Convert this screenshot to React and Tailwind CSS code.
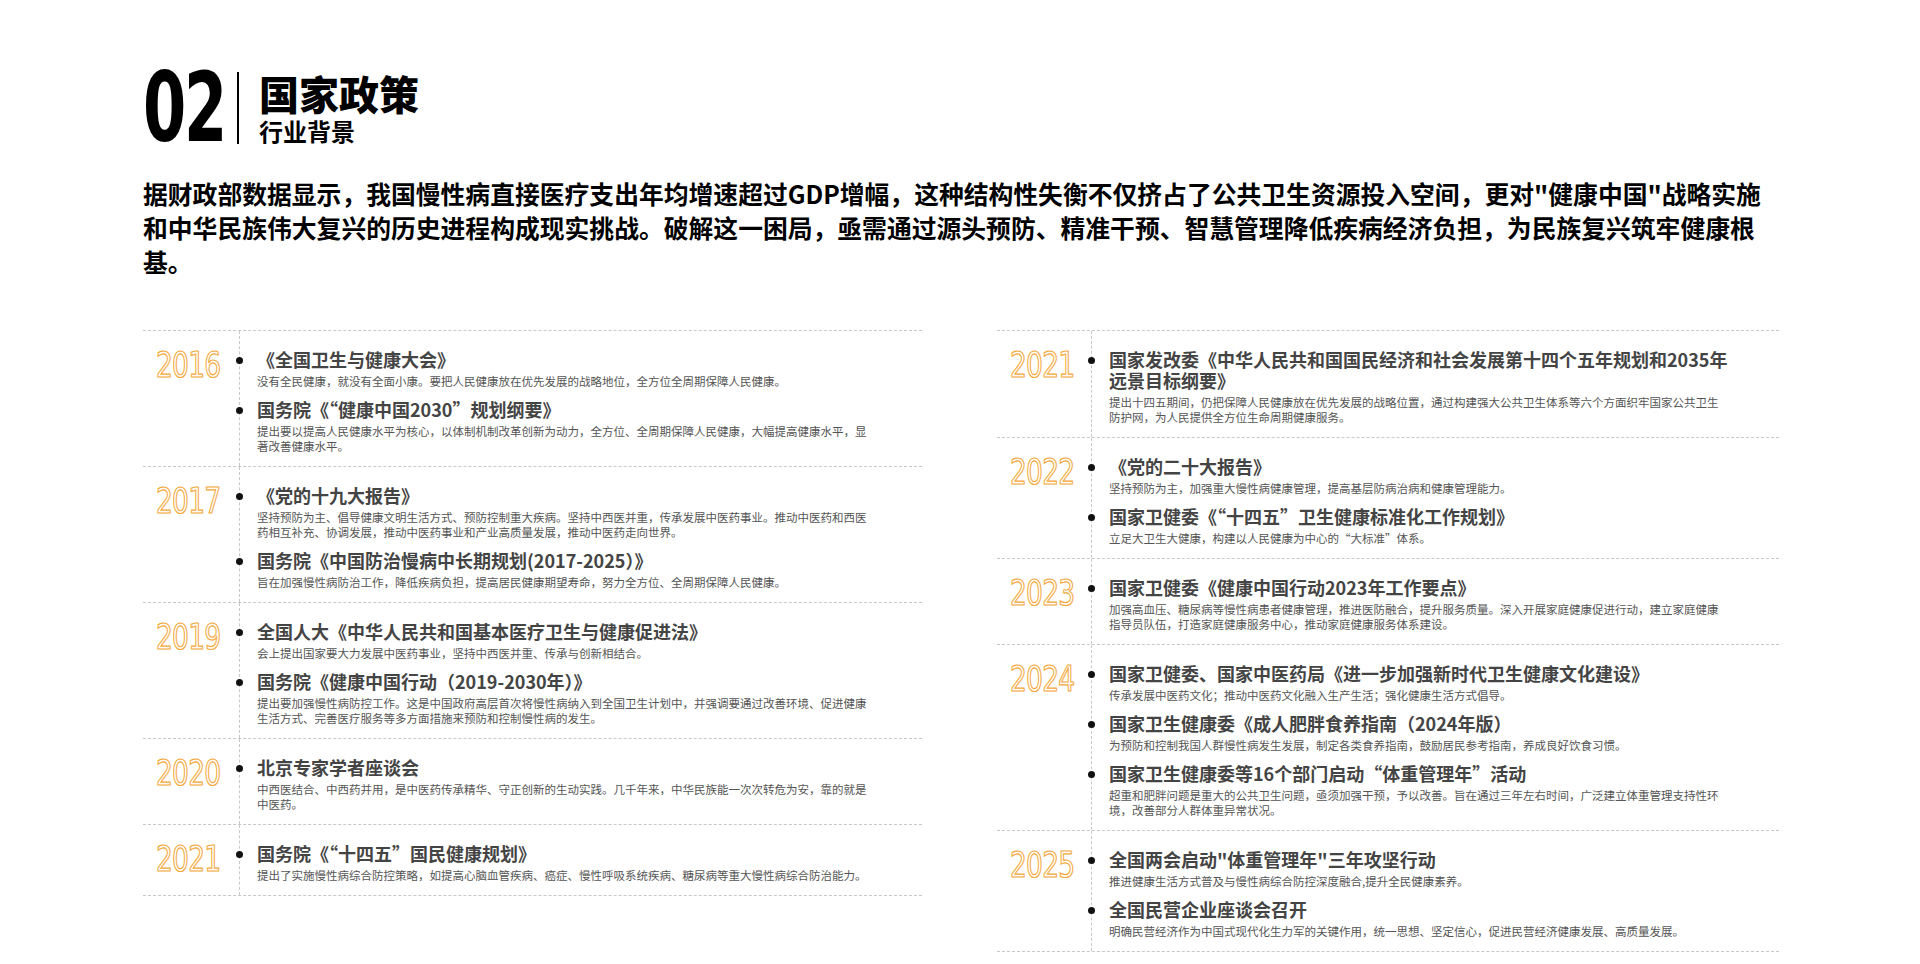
import React from 'react';

const left = [
  { year: '2016', items: [
    { t: '《全国卫生与健康大会》', d: '没有全民健康，就没有全面小康。要把人民健康放在优先发展的战略地位，全方位全周期保障人民健康。' },
    { t: '国务院《“健康中国2030”规划纲要》', d: '提出要以提高人民健康水平为核心，以体制机制改革创新为动力，全方位、全周期保障人民健康，大幅提高健康水平，显著改善健康水平。' },
  ] },
  { year: '2017', items: [
    { t: '《党的十九大报告》', d: '坚持预防为主、倡导健康文明生活方式、预防控制重大疾病。坚持中西医并重，传承发展中医药事业。推动中医药和西医药相互补充、协调发展，推动中医药事业和产业高质量发展，推动中医药走向世界。' },
    { t: '国务院《中国防治慢病中长期规划(2017-2025）》', d: '旨在加强慢性病防治工作，降低疾病负担，提高居民健康期望寿命，努力全方位、全周期保障人民健康。' },
  ] },
  { year: '2019', items: [
    { t: '全国人大《中华人民共和国基本医疗卫生与健康促进法》', d: '会上提出国家要大力发展中医药事业，坚持中西医并重、传承与创新相结合。' },
    { t: '国务院《健康中国行动（2019-2030年）》', d: '提出要加强慢性病防控工作。这是中国政府高层首次将慢性病纳入到全国卫生计划中，并强调要通过改善环境、促进健康生活方式、完善医疗服务等多方面措施来预防和控制慢性病的发生。' },
  ] },
  { year: '2020', items: [
    { t: '北京专家学者座谈会', d: '中西医结合、中西药并用，是中医药传承精华、守正创新的生动实践。几千年来，中华民族能一次次转危为安，靠的就是中医药。' },
  ] },
  { year: '2021', items: [
    { t: '国务院《“十四五”国民健康规划》', d: '提出了实施慢性病综合防控策略，如提高心脑血管疾病、癌症、慢性呼吸系统疾病、糖尿病等重大慢性病综合防治能力。' },
  ] },
];

const right = [
  { year: '2021', items: [
    { t: '国家发改委《中华人民共和国国民经济和社会发展第十四个五年规划和2035年远景目标纲要》', d: '提出十四五期间，仍把保障人民健康放在优先发展的战略位置，通过构建强大公共卫生体系等六个方面织牢国家公共卫生防护网，为人民提供全方位生命周期健康服务。' },
  ] },
  { year: '2022', items: [
    { t: '《党的二十大报告》', d: '坚持预防为主，加强重大慢性病健康管理，提高基层防病治病和健康管理能力。' },
    { t: '国家卫健委《“十四五”卫生健康标准化工作规划》', d: '立足大卫生大健康，构建以人民健康为中心的“大标准”体系。' },
  ] },
  { year: '2023', items: [
    { t: '国家卫健委《健康中国行动2023年工作要点》', d: '加强高血压、糖尿病等慢性病患者健康管理，推进医防融合，提升服务质量。深入开展家庭健康促进行动，建立家庭健康指导员队伍，打造家庭健康服务中心，推动家庭健康服务体系建设。' },
  ] },
  { year: '2024', items: [
    { t: '国家卫健委、国家中医药局《进一步加强新时代卫生健康文化建设》', d: '传承发展中医药文化；推动中医药文化融入生产生活；强化健康生活方式倡导。' },
    { t: '国家卫生健康委《成人肥胖食养指南（2024年版）', d: '为预防和控制我国人群慢性病发生发展，制定各类食养指南，鼓励居民参考指南，养成良好饮食习惯。' },
    { t: '国家卫生健康委等16个部门启动“体重管理年”活动', d: '超重和肥胖问题是重大的公共卫生问题，亟须加强干预，予以改善。旨在通过三年左右时间，广泛建立体重管理支持性环境，改善部分人群体重异常状况。' },
  ] },
  { year: '2025', items: [
    { t: '全国两会启动"体重管理年"三年攻坚行动', d: '推进健康生活方式普及与慢性病综合防控深度融合,提升全民健康素养。' },
    { t: '全国民营企业座谈会召开', d: '明确民营经济作为中国式现代化生力军的关键作用，统一思想、坚定信心，促进民营经济健康发展、高质量发展。' },
  ] },
];

const cjk = { fontFamily: '"Noto Sans CJK SC", sans-serif' };
const narrow = { fontFamily: '"DejaVu Sans Condensed", "Liberation Sans Narrow", sans-serif' };

function Row({ row, yearW }) {
  return (
    <div className="flex border-b border-dashed border-[#c8c8c8]">
      <div className={`${yearW} shrink-0 border-r border-dashed border-[#c8c8c8] pt-[14px] pl-[13px]`}>
        <div className="origin-left scale-x-[0.82] text-[36px] leading-[40px] text-transparent [-webkit-text-stroke:1.2px_#f3a83a] tracking-[-1px]" style={narrow}>{row.year}</div>
      </div>
      <div className="flex-1 pl-[17px] pr-4 pt-[18px] pb-[12px] flex flex-col gap-[10px]">
        {row.items.map((it, i) => (
          <div key={i} className="relative">
            <span className="absolute left-[-21px] top-[8px] w-[7px] h-[7px] rounded-full bg-[#111]" />
            <div className="text-[18px] leading-[21px] font-bold text-[#444] max-w-[630px]">{it.t}</div>
            <div className="mt-[4px] text-[11.5px] leading-[15px] text-[#555] max-w-[620px]">{it.d}</div>
          </div>
        ))}
      </div>
    </div>
  );
}

export default function App() {
  return (
    <div className="w-[1920px] h-[964px] bg-white overflow-hidden pl-[143px] pr-[138px] pt-[68px]" style={cjk}>
      <div className="flex items-center">
        <div className="w-[88px] origin-left scale-x-[0.72] text-[96px] leading-[80px] font-bold text-black tracking-[-3px]" style={narrow}>02</div>
        <div className="w-[2px] h-[72px] bg-black ml-[6px] mr-[20px]" />
        <div className="flex flex-col">
          <div className="text-[40px] leading-[46px] font-black text-black">国家政策</div>
          <div className="text-[24px] leading-[30px] font-bold text-black">行业背景</div>
        </div>
      </div>
      <p className="mt-[28px] text-[24.8px] leading-[34px] font-bold text-black">
        据财政部数据显示，我国慢性病直接医疗支出年均增速超过GDP增幅，这种结构性失衡不仅挤占了公共卫生资源投入空间，更对"健康中国"战略实施和中华民族伟大复兴的历史进程构成现实挑战。破解这一困局，亟需通过源头预防、精准干预、智慧管理降低疾病经济负担，为民族复兴筑牢健康根基。
      </p>
      <div className="mt-[52px] flex gap-[75px]">
        <div className="w-[779px] border-t border-dashed border-[#c8c8c8]">
          {left.map((r, i) => <Row key={i} row={r} yearW="w-[97px]" />)}
        </div>
        <div className="w-[782px] border-t border-dashed border-[#c8c8c8]">
          {right.map((r, i) => <Row key={i} row={r} yearW="w-[95px]" />)}
        </div>
      </div>
    </div>
  );
}
